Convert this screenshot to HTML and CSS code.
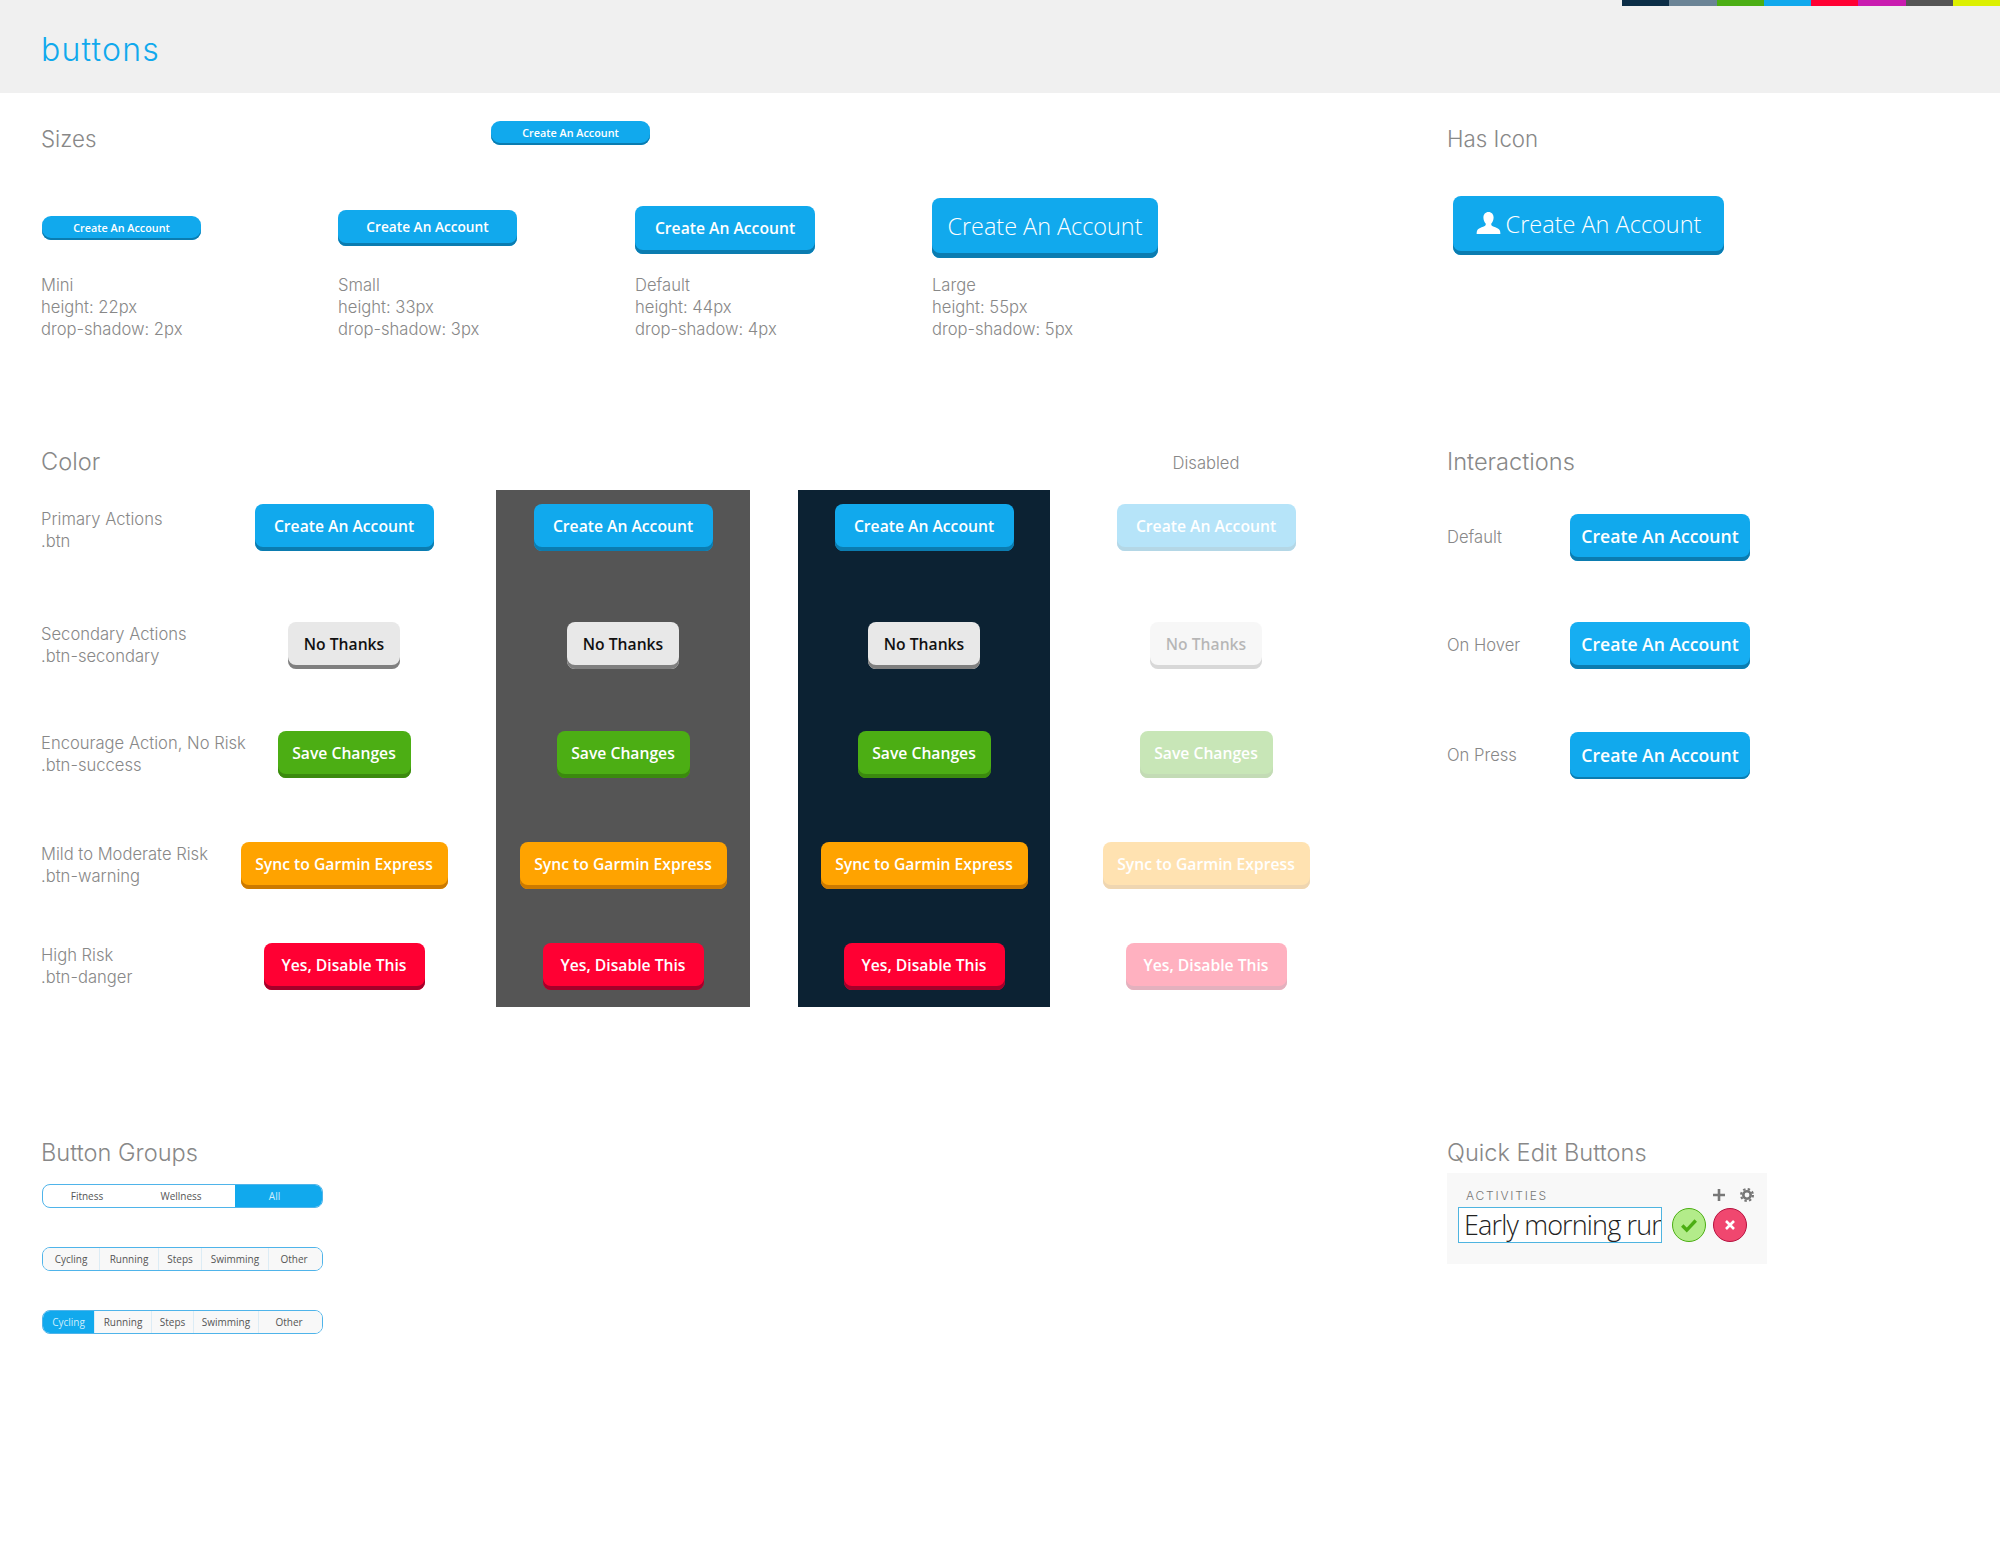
FILE: index.html
```html
<!DOCTYPE html>
<html lang="en">

<head>
  <meta charset="UTF-8">
  <meta name="viewport" content="width=device-width, initial-scale=1.0">
  <title>buttons</title>
  <link rel="stylesheet" href="styles.css">
</head>

<body>
  <header class="top">
    <h1>buttons</h1>
    <div class="strip">
      <span class="navy"></span><span class="slate"></span><span class="green"></span><span class="blue"></span>
      <span class="red"></span><span class="magenta"></span><span class="gray"></span><span class="yellow"></span>
    </div>
  </header>

  <main class="sheet">
    <section>
      <div class="sizes-head">
        <h2>Sizes</h2>
        <a class="btn btn-mini stray">Create An Account</a>
      </div>
      <div class="sizes">
        <div class="size">
          <div class="size-demo"><a class="btn btn-mini nudge">Create An Account</a></div>
          <p>Mini<br>height: 22px<br>drop-shadow: 2px</p>
        </div>
        <div class="size">
          <div class="size-demo"><a class="btn btn-small">Create An Account</a></div>
          <p>Small<br>height: 33px<br>drop-shadow: 3px</p>
        </div>
        <div class="size">
          <div class="size-demo"><a class="btn btn-default">Create An Account</a></div>
          <p>Default<br>height: 44px<br>drop-shadow: 4px</p>
        </div>
        <div class="size">
          <div class="size-demo"><a class="btn btn-large">Create An Account</a></div>
          <p>Large<br>height: 55px<br>drop-shadow: 5px</p>
        </div>
      </div>
    </section>

    <section>
      <h2>Has Icon</h2>
      <a class="btn btn-icon">
        <svg viewBox="0 0 24 24" width="25" height="25" aria-hidden="true">
          <path fill="#fff" d="M12 1c3 0 4.900 2.300 4.900 5.300 0 2.400-1 4.700-2.300 6 0 1.300.5 2 1.900 2.600 2.900 1.100 5.800 2 6.500 4.100.3.900.4 2 .4 3H.6c0-1 .1-2.100.4-3 .7-2.100 3.600-3 6.500-4.100 1.400-.6 1.900-1.300 1.900-2.600-1.300-1.300-2.300-3.600-2.300-6C7.100 3.300 9 1 12 1z"/>
        </svg>
        Create An Account
      </a>
    </section>

    <section>
      <div class="color-head">
        <h2 class="big">Color</h2>
        <span>Disabled</span>
      </div>
      <div class="color-table">
        <div class="rows labels">
          <p>Primary Actions<br>.btn</p>
          <p>Secondary Actions<br>.btn-secondary</p>
          <p>Encourage Action, No Risk<br>.btn-success</p>
          <p>Mild to Moderate Risk<br>.btn-warning</p>
          <p>High Risk<br>.btn-danger</p>
        </div>
        <div class="rows variant plain">
          <a class="btn btn-default">Create An Account</a>
          <a class="btn btn-default secondary">No Thanks</a>
          <a class="btn btn-default success">Save Changes</a>
          <a class="btn btn-default warning">Sync to Garmin Express</a>
          <a class="btn btn-default danger">Yes, Disable This</a>
        </div>
        <div class="rows variant on-gray">
          <a class="btn btn-default">Create An Account</a>
          <a class="btn btn-default secondary">No Thanks</a>
          <a class="btn btn-default success">Save Changes</a>
          <a class="btn btn-default warning">Sync to Garmin Express</a>
          <a class="btn btn-default danger">Yes, Disable This</a>
        </div>
        <div class="rows variant on-navy">
          <a class="btn btn-default">Create An Account</a>
          <a class="btn btn-default secondary">No Thanks</a>
          <a class="btn btn-default success">Save Changes</a>
          <a class="btn btn-default warning">Sync to Garmin Express</a>
          <a class="btn btn-default danger">Yes, Disable This</a>
        </div>
        <div class="rows variant disabled">
          <a class="btn btn-default">Create An Account</a>
          <a class="btn btn-default secondary">No Thanks</a>
          <a class="btn btn-default success">Save Changes</a>
          <a class="btn btn-default warning">Sync to Garmin Express</a>
          <a class="btn btn-default danger">Yes, Disable This</a>
        </div>
      </div>
    </section>

    <section>
      <h2 class="big">Interactions</h2>
      <div class="states">
        <span>Default</span>
        <a class="btn btn-state">Create An Account</a>
        <span>On Hover</span>
        <a class="btn btn-state hover">Create An Account</a>
        <span>On Press</span>
        <a class="btn btn-state press">Create An Account</a>
      </div>
    </section>

    <section>
      <h2 class="big">Button Groups</h2>
      <div class="groups">
        <div class="seg seg-a">
          <a>Fitness</a><a>Wellness</a><a class="on">All</a>
        </div>
        <div class="seg seg-b divided">
          <a>Cycling</a><a>Running</a><a>Steps</a><a>Swimming</a><a>Other</a>
        </div>
        <div class="seg seg-c divided">
          <a class="on">Cycling</a><a>Running</a><a>Steps</a><a>Swimming</a><a>Other</a>
        </div>
      </div>
    </section>

    <section>
      <h2 class="big tight">Quick Edit Buttons</h2>
      <div class="quick">
        <div class="quick-top">
          <span class="quick-label">ACTIVITIES</span>
          <svg viewBox="0 0 12 12" width="12" height="12" aria-hidden="true">
            <path fill="#777" d="M4.700 0h2.600v4.700H12v2.600H7.300V12H4.700V7.300H0V4.700h4.700z"/>
          </svg>
          <svg viewBox="0 0 14 14" width="14" height="14" aria-hidden="true">
            <circle cx="7" cy="7" r="3.700" fill="none" stroke="#777" stroke-width="2.600"/>
            <circle cx="7" cy="7" r="5.900" fill="none" stroke="#777" stroke-width="2.200" stroke-dasharray="2.400 2.233"/>
          </svg>
        </div>
        <div class="quick-edit">
          <input class="quick-input" type="text" value="Early morning run" readonly>
          <span class="round ok">
            <svg viewBox="0 0 16 16" width="18" height="18" aria-hidden="true">
              <path fill="none" stroke="#4cae14" stroke-width="3" d="M2 8.500l4 4 8-8.500"/>
            </svg>
          </span>
          <span class="round no">
            <svg viewBox="0 0 10 10" width="10" height="10" aria-hidden="true">
              <path fill="none" stroke="#fff" stroke-width="2.600" d="M1 1l8 8M9 1l-8 8"/>
            </svg>
          </span>
        </div>
      </div>
    </section>
  </main>
</body>

</html>
```

FILE: styles.css
```css
/* blue #11a9ed, green #4cae14, orange #ffa300, red #ff0033 */
body {
  margin: 0;
  background-color: #fff;
  color: #888;
  font-family: Inter, "Noto Sans", sans-serif;
  font-weight: 300;
  font-size: 16.600px;
}

h1,
h2,
p {
  margin: 0;
  font-weight: 300;
}

.top {
  position: relative;
  height: 93px;
  background-color: #f0f0f0;
  padding-left: 41px;
  display: flex;
  align-items: center;
}

h1 {
  color: #11a9ed;
  font-size: 32px;
  letter-spacing: 1.200px;
  line-height: 1;
  padding-top: 6px;
}

.strip {
  position: absolute;
  top: 0;
  right: 0;
  display: flex;
  width: 378px;
  height: 6px;
}

.strip span {
  flex: 1;
}

.navy { background-color: #0c2e47; }
.slate { background-color: #6b8496; }
.green { background-color: #4cae14; }
.blue { background-color: #11a9ed; }
.red { background-color: #ff0033; }
.magenta { background-color: #c91cb0; }
.gray { background-color: #555; }
.yellow { background-color: #dcf000; }

.sheet {
  display: grid;
  grid-template-columns: 1406px 1fr;
  grid-template-rows: 323px 691px auto;
  padding: 32px 0 0 41px;
}

h2 {
  font-size: 22.300px;
  line-height: 28px;
}

h2.big {
  font-size: 23.600px;
}

/* buttons */
.btn {
  display: inline-flex;
  align-items: center;
  justify-content: center;
  box-sizing: border-box;
  font-family: "Open Sans", sans-serif;
  font-weight: 600;
  color: #fff;
  white-space: nowrap;
  background-color: #11a9ed;
  --lip: #0b7cb0;
  border-radius: 8px;
}

.btn-mini {
  width: 159px;
  height: 24px;
  font-size: 10.800px;
  border-radius: 9px;
  box-shadow: inset 0 -2px 0 var(--lip);
  padding-bottom: 2px;
}

.btn-small {
  width: 179px;
  height: 36px;
  font-size: 13.700px;
  box-shadow: inset 0 -3px 0 var(--lip);
  padding-bottom: 3px;
}

.btn-default {
  width: 179px;
  height: 47px;
  padding-bottom: 4px;
  font-size: 15.700px;
  box-shadow: inset 0 -4px 0 var(--lip);
}

.size .btn-default {
  width: 180px;
  height: 48px;
  margin-top: 4px;
}

.btn-large {
  width: 226px;
  height: 60px;
  font-size: 23.400px;
  font-weight: 300;
  box-shadow: inset 0 -5px 0 var(--lip);
  padding-bottom: 5px;
}

.btn-icon {
  width: 271px;
  height: 59px;
  margin: 43px 0 0 6px;
  gap: 5px;
  font-size: 23.500px;
  font-weight: 300;
  box-shadow: inset 0 -4px 0 var(--lip);
  padding-bottom: 4px;
}

.btn-state {
  width: 180px;
  height: 47px;
  font-size: 17.600px;
  box-shadow: inset 0 -4px 0 var(--lip);
  padding-bottom: 4px;
}

.hover {
  background-color: #16aef2;
}

.press {
  box-shadow: inset 0 -2px 0 var(--lip);
  padding-bottom: 2px;
}

.secondary {
  width: 112px;
  background-color: #e8e8e8;
  --lip: #7f7f7f;
  color: #111;
}

.success {
  width: 133px;
  background-color: #4cae14;
  --lip: #3b8a0e;
}

.warning {
  width: 207px;
  background-color: #ffa300;
  --lip: #cc7a00;
}

.danger {
  width: 161px;
  background-color: #ff0033;
  --lip: #a5002a;
}

/* sizes */
.sizes-head {
  display: flex;
  align-items: flex-start;
}

.sizes-head h2 {
  width: 450px;
}

.stray {
  margin-top: -4px;
}

.sizes {
  display: grid;
  grid-template-columns: repeat(4, 297px);
  margin-top: 45px;
}

.size-demo {
  display: flex;
  align-items: center;
  height: 60px;
}

.nudge {
  margin-left: 1px;
}

.size p {
  margin-top: 17px;
  line-height: 21.800px;
}

/* color table */
.color-head {
  display: flex;
  align-items: center;
}

.color-head h2 {
  width: 1009px;
}

.color-head span {
  width: 312px;
  text-align: center;
  padding-top: 2px;
}

.color-table {
  display: flex;
  margin-top: 14px;
}

.rows {
  display: grid;
  grid-template-rows: 118px 109px 111px 101px 64px;
  justify-items: center;
  align-items: start;
  padding-top: 14px;
}

.labels {
  width: 193px;
  justify-items: start;
}

.labels p {
  height: 47px;
  line-height: 21.800px;
  white-space: nowrap;
  padding-top: 2px;
}

.labels p:first-child {
  padding-top: 5px;
}

.plain {
  width: 220px;
}

.on-gray {
  width: 254px;
  margin-left: 42px;
  background-color: #555;
}

.on-navy {
  width: 252px;
  margin-left: 48px;
  background-color: #0c2233;
}

.disabled {
  width: 312px;
}

.disabled .btn {
  opacity: 0.3;
}

/* interactions */
.states {
  display: grid;
  grid-template-columns: 123px 180px;
  grid-template-rows: 108px 110px 47px;
  align-items: start;
  margin-top: 38px;
}

.states span {
  line-height: 46px;
}

/* groups */
.groups {
  display: flex;
  flex-direction: column;
  gap: 39px;
  width: 281px;
  margin: 17px 0 0 1px;
}

.seg {
  display: grid;
  box-sizing: border-box;
  height: 24px;
  border: 1.500px solid #4fb4ea;
  border-radius: 8px;
  overflow: hidden;
  font-family: "Open Sans", sans-serif;
  font-weight: 400;
  font-size: 10px;
  color: #555;
}

.seg a {
  display: flex;
  align-items: center;
  justify-content: center;
  padding-bottom: 1px;
}

.seg .on {
  background-color: #11a9ed;
  color: #cfeefc;
}

.divided a {
  border-right: 1px solid #dcecf5;
  background-color: #f8f8f8;
}

.divided a:last-child {
  border-right: 0;
  padding-right: 3px;
}

.seg-a a {
  padding-right: 8px;
}

.seg-a a:first-child {
  padding-right: 4px;
}

.seg-a { grid-template-columns: 92px 100px 1fr; }
.seg-b { grid-template-columns: 57px 59px 43px 67px 1fr; }
.seg-c { grid-template-columns: 52px 57px 42px 65px 1fr; }

/* quick edit */
.tight {
  margin-bottom: 6px;
}

.quick {
  box-sizing: border-box;
  width: 320px;
  height: 91px;
  padding-top: 12px;
  background-color: #f8f8f8;
}

.quick-top {
  display: flex;
  align-items: center;
  gap: 15px;
  height: 20px;
  padding: 0 13px 0 19px;
}

.quick-label {
  flex: 1;
  font-size: 12px;
  letter-spacing: 1.800px;
  color: #777;
}

.quick-edit {
  display: flex;
  align-items: center;
  gap: 7px;
  margin: 2px 0 0 11px;
}

.quick-input {
  box-sizing: border-box;
  width: 204px;
  height: 36px;
  margin-right: 3px;
  padding: 0 0 2px 5px;
  border: 1px solid #4fb4e0;
  border-radius: 0;
  outline: 0;
  background-color: #fff;
  color: #222;
  font-family: "Open Sans", sans-serif;
  font-weight: 300;
  font-size: 27px;
  letter-spacing: -0.850px;
}

.round {
  box-sizing: border-box;
  display: flex;
  align-items: center;
  justify-content: center;
  width: 34px;
  height: 34px;
  border-radius: 50%;
}

.ok {
  background-color: #b3ec8a;
  border: 1.500px solid #4cae14;
}

.no {
  background-color: #f0476f;
  border: 1.500px solid #b5123f;
}
```
